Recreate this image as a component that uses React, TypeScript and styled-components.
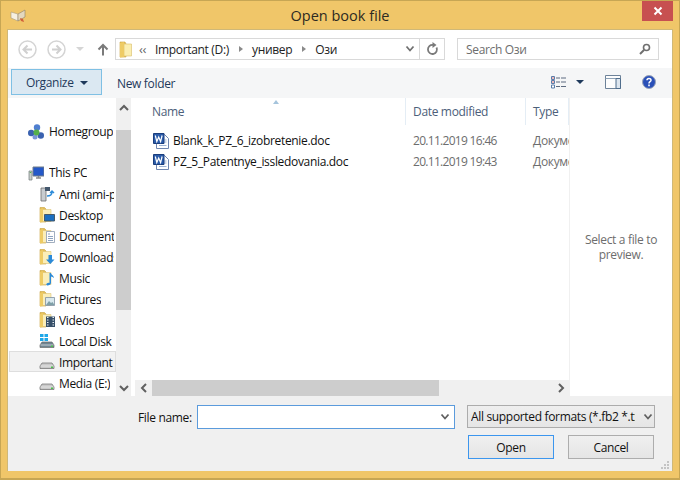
import { createGlobalStyle, styled } from "styled-components";

const GlobalStyle = createGlobalStyle`
  html, body {
    margin: 0;
    padding: 0;
    background: #efc669;
  }
  * {
    box-sizing: border-box;
  }
`;

const Window = styled.div`
  display: flex;
  flex-direction: column;
  width: 680px;
  height: 480px;
  padding: 0 6px 7px;
  border: 1px solid #c7a654;
  border-bottom-width: 2px;
  background: #f0c669;
  font-family: "Open Sans", "Noto Sans", sans-serif;
  font-size: 12px;
  letter-spacing: -0.33px;
  color: #111;
  overflow: hidden;
`;

const TitleBar = styled.div`
  display: grid;
  grid-template-columns: 1fr auto 1fr;
  height: 28px;
  flex: none;
`;

const TitleIcon = styled.div`
  display: flex;
  align-items: flex-start;
  padding: 8px 0 0 3px;
`;

const Title = styled.div`
  padding-top: 5px;
  font-size: 14.5px;
  line-height: 20px;
  letter-spacing: 0;
  color: #2d2a22;
`;

const CloseCell = styled.div`
  display: flex;
  justify-content: flex-end;
`;

const CloseBtn = styled.div`
  display: flex;
  align-items: center;
  justify-content: center;
  width: 31px;
  height: 20px;
  background: #c75050;
`;

const Body = styled.div`
  display: flex;
  flex-direction: column;
  flex: 1;
  min-height: 0;
  background: #f0f0f0;
  border: 1px solid #cfb878;
  border-width: 1px 1px 0;
`;

const NavBar = styled.div`
  display: flex;
  align-items: center;
  height: 38px;
  flex: none;
  padding: 0 12px 0 10px;
  background: #fff;
`;

const RoundBtn = styled.div`
  display: flex;
  align-items: center;
  justify-content: center;
  width: 19px;
  height: 19px;
  margin-right: 10px;
`;

const RecentCaret = styled.div`
  width: 0;
  height: 0;
  margin: 0 13px 0 0;
  border: 4px solid transparent;
  border-top: 4px solid #d5d5d5;
  border-bottom: 0;
`;

const UpBtn = styled.div`
  display: flex;
  width: 12px;
  margin-right: 6px;
`;

const AddressBox = styled.div`
  display: flex;
  align-items: center;
  width: 330px;
  height: 22px;
  flex: none;
  padding-left: 3px;
  border: 1px solid #d9d9d9;
  white-space: nowrap;
  color: #222;
`;

const Crumbs = styled.div`
  display: flex;
  align-items: center;
  flex: 1;
  padding-left: 6px;
`;

const CrumbChevrons = styled.span`
  width: 16px;
  color: #666;
  font-size: 13px;
  line-height: 14px;
`;

const CrumbArrow = styled.span`
  width: 0;
  height: 0;
  margin: 0 9px 0 10px;
  border: 3.5px solid transparent;
  border-left: 4px solid #8a8a8a;
  border-right: 0;
`;

const DropEnd = styled.div`
  display: flex;
  align-items: center;
  justify-content: center;
  width: 25px;
  height: 100%;
  flex: none;
  padding-left: 7px;
`;

const RefreshEnd = styled.div`
  display: flex;
  align-items: center;
  justify-content: center;
  width: 25px;
  height: 100%;
  flex: none;
  border-left: 1px solid #d9d9d9;
`;

const SearchBox = styled.div`
  display: flex;
  align-items: center;
  justify-content: space-between;
  width: 202px;
  height: 22px;
  margin-left: 12px;
  padding: 0 7px 0 8px;
  border: 1px solid #d9d9d9;
  color: #6d6d6d;
`;

const Toolbar = styled.div`
  display: flex;
  align-items: center;
  height: 30px;
  flex: none;
  padding: 0 16px 2px 3px;
  background: #f5f6f7;
`;

const OrganizeBtn = styled.div`
  display: flex;
  align-items: center;
  gap: 6px;
  width: 91px;
  height: 26px;
  padding: 1px 0 0 14px;
  border: 1px solid #7fc0e4;
  background: #dbe8f2;
  color: #1e395b;
`;

const Caret = styled.span`
  width: 0;
  height: 0;
  border: 4px solid transparent;
  border-top: 4px solid #1e395b;
  border-bottom: 0;
`;

const NewFolder = styled.div`
  margin-left: 15px;
  padding-top: 2px;
  color: #1e395b;
`;

const ToolIcons = styled.div`
  display: flex;
  align-items: center;
  margin-left: auto;
`;

const ViewCaret = styled(Caret)`
  margin: 0 21px 0 10px;
`;

const HelpIcon = styled.div`
  display: flex;
  margin-left: 21px;
`;

const Main = styled.div`
  display: flex;
  flex: 1;
  min-height: 0;
  background: #fff;
`;

const NavPane = styled.div`
  display: flex;
  flex-direction: column;
  width: 108px;
  flex: none;
  padding-top: 23px;
  overflow: hidden;
`;

const NavRow = styled.div<{ $depth: number; $gap?: number; $active?: boolean }>`
  display: flex;
  align-items: center;
  gap: ${(p) => (p.$depth ? 4 : 5)}px;
  height: 21px;
  flex: none;
  margin: ${(p) => p.$gap ?? 0}px 0 0 1px;
  padding: 0 1px 0 ${(p) => (p.$depth ? 29 : 18)}px;
  white-space: nowrap;
  border: 1px solid ${(p) => (p.$active ? "#dedede" : "transparent")};
  background: ${(p) => (p.$active ? "#f2f2f2" : "transparent")};
`;

const NavLabel = styled.span<{ $depth: number }>`
  min-width: 0;
  padding-top: ${(p) => (p.$depth ? 2 : 0)}px;
  overflow: hidden;
`;

const NavIcon = styled.svg`
  width: 16px;
  height: 16px;
  flex: none;
`;

const VScroll = styled.div`
  display: flex;
  flex-direction: column;
  width: 15px;
  flex: none;
  background: #f0f0f0;
`;

const ScrollEnd = styled.div`
  display: flex;
  align-items: center;
  justify-content: center;
  height: 17px;
  flex: none;
`;

const VTop = styled(ScrollEnd)`
  height: 32px;
  padding-bottom: 12px;
`;

const VThumb = styled.div`
  height: 180px;
  flex: none;
  background: #cdcdcd;
`;

const Spacer = styled.div`
  flex: 1;
`;

const FilePane = styled.div`
  display: flex;
  flex-direction: column;
  flex: 1;
  min-width: 0;
  margin-left: 2px;
`;

const HeaderRow = styled.div`
  position: relative;
  display: grid;
  grid-template-columns: 273px 120px 43px;
  height: 27px;
  flex: none;
  color: #4c607a;
`;

const SortMark = styled.span`
  position: absolute;
  top: 2px;
  left: 140px;
  width: 0;
  height: 0;
  border: 3.5px solid transparent;
  border-bottom: 4px solid #a5c4dc;
  border-top: 0;
`;

const HeaderCell = styled.div`
  display: flex;
  align-items: center;
  padding-left: 7px;
  border-right: 1px solid #e4edf5;
  overflow: hidden;
  white-space: nowrap;
`;

const NameHeader = styled(HeaderCell)`
  padding-left: 19px;
`;

const FileList = styled.div`
  flex: 1;
  padding-top: 5px;
`;

const FileRow = styled.div`
  display: grid;
  grid-template-columns: 273px 120px 43px;
  align-items: center;
  height: 21px;
`;

const FileName = styled.div`
  display: flex;
  align-items: center;
  gap: 4px;
  padding-left: 20px;
  white-space: nowrap;
`;

const FileMeta = styled.div`
  padding-left: 7px;
  color: #6d6d6d;
  white-space: nowrap;
  overflow: hidden;
`;

const FileDate = styled(FileMeta)`
  letter-spacing: -0.7px;
`;

const HScroll = styled.div`
  display: flex;
  height: 16px;
  flex: none;
  margin-left: 2px;
  background: #f0f0f0;
`;

const HEnd = styled.div`
  display: flex;
  align-items: center;
  justify-content: center;
  width: 17px;
  flex: none;
`;

const HThumb = styled.div`
  width: 287px;
  flex: none;
  background: #cdcdcd;
`;

const PreviewPane = styled.div`
  display: flex;
  align-items: center;
  justify-content: center;
  width: 103px;
  flex: none;
  padding: 0 8px;
  border-left: 1px solid #f0f0f0;
  text-align: center;
  line-height: 15px;
  color: #6d6d6d;
`;

const Footer = styled.div`
  position: relative;
  display: grid;
  grid-template-columns: 258px 188px;
  grid-template-rows: 24px 24px;
  column-gap: 12px;
  row-gap: 6px;
  height: 75px;
  flex: none;
  padding: 9px 0 0 189px;
`;

const FileLabel = styled.label`
  position: absolute;
  left: 130px;
  top: 13px;
  line-height: 17px;
`;

const NameInput = styled.div`
  display: flex;
  align-items: center;
  justify-content: flex-end;
  padding-right: 4px;
  border: 1px solid #5b9bdc;
  background: #fff;
`;

const TypeSelect = styled.div`
  display: flex;
  align-items: center;
  gap: 8px;
  height: 23px;
  padding: 0 1px 0 3px;
  border: 1px solid #acacac;
  background: linear-gradient(#efefef, #e5e5e5);
  white-space: nowrap;
  overflow: hidden;
`;

const TypeText = styled.span`
  flex: 1;
  overflow: hidden;
`;

const ButtonRow = styled.div`
  grid-column: 1 / 3;
  display: flex;
  justify-content: flex-end;
  gap: 14px;
  margin-right: 1px;
`;

const Button = styled.div<{ $primary?: boolean }>`
  display: flex;
  align-items: center;
  justify-content: center;
  width: 86px;
  height: 24px;
  border: 1px solid ${(p) => (p.$primary ? "#3c96ee" : "#adadad")};
  background: linear-gradient(#f0f0f0, #e5e5e5);
`;

const Grip = styled.svg`
  position: absolute;
  right: 2px;
  bottom: 1px;
`;

const ScrollChevron = ({ d }: { d: string }) => (
  <svg width="10" height="10" viewBox="0 0 10 10">
    <path d={d} fill="none" stroke="#606060" strokeWidth="2" />
  </svg>
);

const DropChevron = ({ color }: { color: string }) => (
  <svg width="10" height="8" viewBox="0 0 10 8">
    <path d="M1.5 1.5L5 5.5l3.5-4" fill="none" stroke={color} strokeWidth="1.8" />
  </svg>
);

const Folder = ({ badge }: { badge?: string }) => (
  <NavIcon viewBox="0 0 16 16">
    <path d="M1 .5h4.5L7 2v13H1z" fill="#e3bd58" stroke="#c9a23e" strokeWidth=".6" />
    <path d="M3 2.5h9v12H3z" fill="#fbeeb8" stroke="#dcc277" strokeWidth=".6" />
    <path d="M1 2l3-1v14l-3 .5z" fill="#eecb64" />
    {badge === "doc" && <path d="M7.5 3.5h8v11h-8z" fill="#fff" stroke="#8a9ab0" strokeWidth=".8" />}
    {badge === "doc" && <path d="M9 6h2M9 8.5h5M9 10.5h5M9 12.5h5" stroke="#8ea4c0" />}
    {badge === "down" && <path d="M9.5 6H13v4.5h2.5L11.300 15 7 10.500h2.500z" fill="#2b8ad8" />}
    {badge === "music" && <path d="M10.500 3H12c0 2 3 2.500 3 5-1-1-2-1.500-3-1.500V13c0 1.500-2 2.500-3.500 2.500S7 14 8 13.200c.8-.6 1.800-.7 2.500-.3z" fill="#2b8ad8" />}
    {badge === "pic" && <path d="M6.500 6.500h9v8h-9z" fill="#d8e8ee" stroke="#7f8f9f" strokeWidth=".8" />}
    {badge === "pic" && <path d="M7 14l3-4 2 2 1.500-1 2 3z" fill="#7fa0a8" />}
    {badge === "video" && <path d="M7 4.500h9V15H7z" fill="#37506a" />}
    {badge === "video" && <path d="M8 5.500h1.500M8 8h1.500M8 10.500h1.500M8 13h1.500M13.500 5.500H15M13.500 8H15M13.500 10.500H15M13.500 13H15" stroke="#e8eef2" />}
    {badge === "desk" && <path d="M5.500 7.500h10V14h-10z" fill="#1c6fc0" stroke="#40505f" strokeWidth=".9" />}
  </NavIcon>
);

const Drive = ({ system }: { system?: boolean }) => (
  <NavIcon viewBox="0 0 16 16">
    {system && <path d="M1 1h3.500v3H1zM5.500 1H9v3H5.500zM1 5h3.500v3H1zM5.500 5H9v3H5.500z" fill="#1fa7e8" />}
    <path d="M1 12l2-3h10l2 3v2.500H1z" fill={system ? "#6f8592" : "#c9c9c9"} stroke="#6c6c6c" strokeWidth=".7" />
    <path d="M1.500 12h13" stroke="#efefef" strokeWidth=".7" />
    <path d="M12 12.500h2V14h-2z" fill="#4cc04c" />
  </NavIcon>
);

const WordIcon = () => (
  <svg width="16" height="16" viewBox="0 0 16 16">
    <path d="M3.500 1.500h8l4 4v10h-12z" fill="#fff" stroke="#6f86b0" />
    <path d="M11.500 7h2M11.500 9h2M6 12.500h7.500" stroke="#9fb4d4" />
    <path d="M.5.5H11v10H.5z" fill="#2b5ba8" stroke="#1a3d7c" />
    <path d="M2.300 2.500l1.500 6 1.900-4.500 1.900 4.500 1.500-6" fill="none" stroke="#fff" strokeWidth="1.2" />
  </svg>
);

const navItems = [
  { label: "Ami (ami-pc)", kind: "net" },
  { label: "Desktop", kind: "desk" },
  { label: "Documents", kind: "doc" },
  { label: "Downloads", kind: "down" },
  { label: "Music", kind: "music" },
  { label: "Pictures", kind: "pic" },
  { label: "Videos", kind: "video" },
];

const files = [
  { name: "Blank_k_PZ_6_izobretenie.doc", date: "20.11.2019 16:46" },
  { name: "PZ_5_Patentnye_issledovania.doc", date: "20.11.2019 19:43" },
];

function App() {
  return (
    <>
      <GlobalStyle />
      <Window>
        <TitleBar>
          <TitleIcon>
            <svg width="17" height="13" viewBox="0 0 17 13">
              <path d="M1 3l7 2v7L1 9z" fill="#f6f0e2" stroke="#a89a7c" strokeWidth=".6" />
              <path d="M8 5l7-4v7l-7 4z" fill="#e4d8be" stroke="#8f8064" strokeWidth=".6" />
              <path d="M10 9l3 1 1 3-3-1z" fill="#d3603a" />
            </svg>
          </TitleIcon>
          <Title>Open book file</Title>
          <CloseCell>
            <CloseBtn>
              <svg width="10" height="10" viewBox="0 0 10 10">
                <path d="M1.5 1.5l7 7M8.5 1.5l-7 7" stroke="#fff" strokeWidth="2" />
              </svg>
            </CloseBtn>
          </CloseCell>
        </TitleBar>
        <Body>
          <NavBar>
            <RoundBtn>
              <svg width="19" height="19" viewBox="0 0 19 19">
                <circle cx="9.5" cy="9.5" r="8.5" fill="#fff" stroke="#d4d4d4" strokeWidth="1.5" />
                <path d="M14 9.5H6M9.5 5.5l-4 4 4 4" fill="none" stroke="#d0d0d0" strokeWidth="2" />
              </svg>
            </RoundBtn>
            <RoundBtn>
              <svg width="19" height="19" viewBox="0 0 19 19">
                <circle cx="9.5" cy="9.5" r="8.5" fill="#fff" stroke="#d4d4d4" strokeWidth="1.5" />
                <path d="M5 9.5h8M9.5 5.5l4 4-4 4" fill="none" stroke="#d0d0d0" strokeWidth="2" />
              </svg>
            </RoundBtn>
            <RecentCaret />
            <UpBtn>
              <svg width="12" height="13" viewBox="0 0 12 13">
                <path d="M6 12.5V2M1.5 6.5L6 2l4.500 4.500" fill="none" stroke="#7a7a7a" strokeWidth="2" />
              </svg>
            </UpBtn>
            <AddressBox>
              <svg width="14" height="17" viewBox="0 0 14 17">
                <path d="M1 1h5l1 2v13H1z" fill="#e8c45e" stroke="#c9a23e" strokeWidth=".6" />
                <path d="M5 3h7.5v12H5z" fill="#fbeeb0" stroke="#d9bc68" strokeWidth=".6" />
                <path d="M1 2l4-1v15l-4 .5z" fill="#eecb64" />
              </svg>
              <Crumbs>
                <CrumbChevrons>‹‹</CrumbChevrons>
                <span>Important (D:)</span>
                <CrumbArrow />
                <span>универ</span>
                <CrumbArrow />
                <span>Ози</span>
              </Crumbs>
              <DropEnd>
                <DropChevron color="#707070" />
              </DropEnd>
              <RefreshEnd>
                <svg width="13" height="14" viewBox="0 0 13 14">
                  <path d="M10.5 5.5A4.5 4.5 0 1 1 7 3" fill="none" stroke="#7a7a7a" strokeWidth="1.8" />
                  <path d="M6.5 0v6l4-3z" fill="#7a7a7a" />
                </svg>
              </RefreshEnd>
            </AddressBox>
            <SearchBox>
              <span>Search Ози</span>
              <svg width="12" height="12" viewBox="0 0 12 12">
                <circle cx="7.5" cy="4.5" r="3" fill="none" stroke="#6f6f6f" strokeWidth="1.6" />
                <path d="M5 7l-4 4" stroke="#6f6f6f" strokeWidth="2" />
              </svg>
            </SearchBox>
          </NavBar>
          <Toolbar>
            <OrganizeBtn>
              Organize
              <Caret />
            </OrganizeBtn>
            <NewFolder>New folder</NewFolder>
            <ToolIcons>
              <svg width="15" height="13" viewBox="0 0 15 13">
                <path d="M.5.5h3v3h-3zM.5 4.5h3v3h-3zM.5 9h3v3h-3z" fill="#fff" stroke="#5a7ca8" />
                <path d="M1.5 2h1M1.5 6h1" stroke="#d04040" strokeWidth="1.4" />
                <path d="M5 2h4M10 2h5M5 6h4M10 6h5M5 10.5h4M10 10.5h5" stroke="#5d6b80" />
              </svg>
              <ViewCaret />
              <svg width="16" height="14" viewBox="0 0 16 14">
                <path d="M.5.5h15v13H.5z" fill="#fdfdfd" stroke="#6d8299" />
                <path d="M.5 3.5h15" stroke="#8ba0b5" />
                <path d="M11 3.5h4.5v10H11z" fill="#dde6ef" stroke="#4f6d8c" />
              </svg>
              <HelpIcon>
                <svg width="14" height="14" viewBox="0 0 14 14">
                  <circle cx="7" cy="7" r="6.5" fill="#2a50b8" stroke="#9aa4b8" />
                  <path d="M5 5.3C5 3 9 3 9 5.2 9 6.7 7 6.7 7 8.4" fill="none" stroke="#fff" strokeWidth="1.5" />
                  <path d="M6.2 9.6h1.600v1.600H6.200z" fill="#fff" />
                </svg>
              </HelpIcon>
            </ToolIcons>
          </Toolbar>
          <Main>
            <NavPane>
              <NavRow $depth={0}>
                <NavIcon viewBox="0 0 16 16">
                  <circle cx="9" cy="3.500" r="3.200" fill="#4f7fd0" />
                  <circle cx="3.200" cy="9" r="3.200" fill="#3a62b0" />
                  <circle cx="12.800" cy="11.500" r="3.200" fill="#3a62b0" />
                  <circle cx="7" cy="13" r="2.500" fill="#7a96d8" />
                  <circle cx="8.500" cy="8.500" r="3" fill="#55b04a" />
                </NavIcon>
                <NavLabel $depth={0}>Homegroup</NavLabel>
              </NavRow>
              <NavRow $depth={0} $gap={20}>
                <NavIcon viewBox="0 0 16 16">
                  <path d="M5 2h11v9H5z" fill="#2458c8" stroke="#707c88" />
                  <path d="M8 13h5M10.500 11v2" stroke="#8a8a8a" strokeWidth="1.5" />
                  <path d="M1 6h3v9H1z" fill="#c8ccc8" stroke="#70787c" strokeWidth=".7" />
                  <path d="M1.800 7.500h1.400" stroke="#4cc04c" />
                </NavIcon>
                <NavLabel $depth={0}>This PC</NavLabel>
              </NavRow>
              {navItems.map((item) =>
                <NavRow key={item.label} $depth={1}>
                  {item.kind === "net" ? (
                    <NavIcon viewBox="0 0 16 16">
                      <path d="M2 2h5v13H2z" fill="#c8ccd0" stroke="#6c6c6c" strokeWidth=".8" />
                      <path d="M6 1h5v4H6z" fill="#44586e" />
                      <path d="M8 10c3 0 5-1 5-4M11 7l2-2 2 2" fill="none" stroke="#2b8ad8" strokeWidth="1.4" />
                    </NavIcon>
                  ) : (
                    <Folder badge={item.kind} />
                  )}
                  <NavLabel $depth={1}>{item.label}</NavLabel>
                </NavRow>
              )}
              <NavRow $depth={1}>
                <Drive system />
                <NavLabel $depth={1}>Local Disk (C:)</NavLabel>
              </NavRow>
              <NavRow $depth={1} $active>
                <Drive />
                <NavLabel $depth={1}>Important (D:)</NavLabel>
              </NavRow>
              <NavRow $depth={1}>
                <Drive />
                <NavLabel $depth={1}>Media (E:)</NavLabel>
              </NavRow>
            </NavPane>
            <VScroll>
              <VTop>
                <ScrollChevron d="M1 7l4-4 4 4" />
              </VTop>
              <VThumb />
              <Spacer />
              <ScrollEnd>
                <ScrollChevron d="M1 3l4 4 4-4" />
              </ScrollEnd>
            </VScroll>
            <FilePane>
              <HeaderRow>
                <SortMark />
                <NameHeader>Name</NameHeader>
                <HeaderCell>Date modified</HeaderCell>
                <HeaderCell>Type</HeaderCell>
              </HeaderRow>
              <FileList>
                {files.map((file) => (
                  <FileRow key={file.name}>
                    <FileName>
                      <WordIcon />
                      {file.name}
                    </FileName>
                    <FileDate>{file.date}</FileDate>
                    <FileMeta>Документ</FileMeta>
                  </FileRow>
                ))}
              </FileList>
              <HScroll>
                <HEnd>
                  <ScrollChevron d="M7 1L3 5l4 4" />
                </HEnd>
                <HThumb />
                <Spacer />
                <HEnd>
                  <ScrollChevron d="M3 1l4 4-4 4" />
                </HEnd>
              </HScroll>
            </FilePane>
            <PreviewPane>Select a file to preview.</PreviewPane>
          </Main>
          <Footer>
            <FileLabel>File name:</FileLabel>
            <NameInput>
              <DropChevron color="#606060" />
            </NameInput>
            <TypeSelect>
              <TypeText>All supported formats (*.fb2 *.txt)</TypeText>
              <DropChevron color="#606060" />
            </TypeSelect>
            <ButtonRow>
              <Button $primary>Open</Button>
              <Button>Cancel</Button>
            </ButtonRow>
            <Grip width="10" height="9" viewBox="0 0 10 9">
              <path d="M7 0h2v2H7zM4 3h2v2H4zM7 3h2v2H7zM1 6h2v2H1zM4 6h2v2H4zM7 6h2v2H7z" fill="#c4c4c4" />
            </Grip>
          </Footer>
        </Body>
      </Window>
    </>
  );
}

export default App;
